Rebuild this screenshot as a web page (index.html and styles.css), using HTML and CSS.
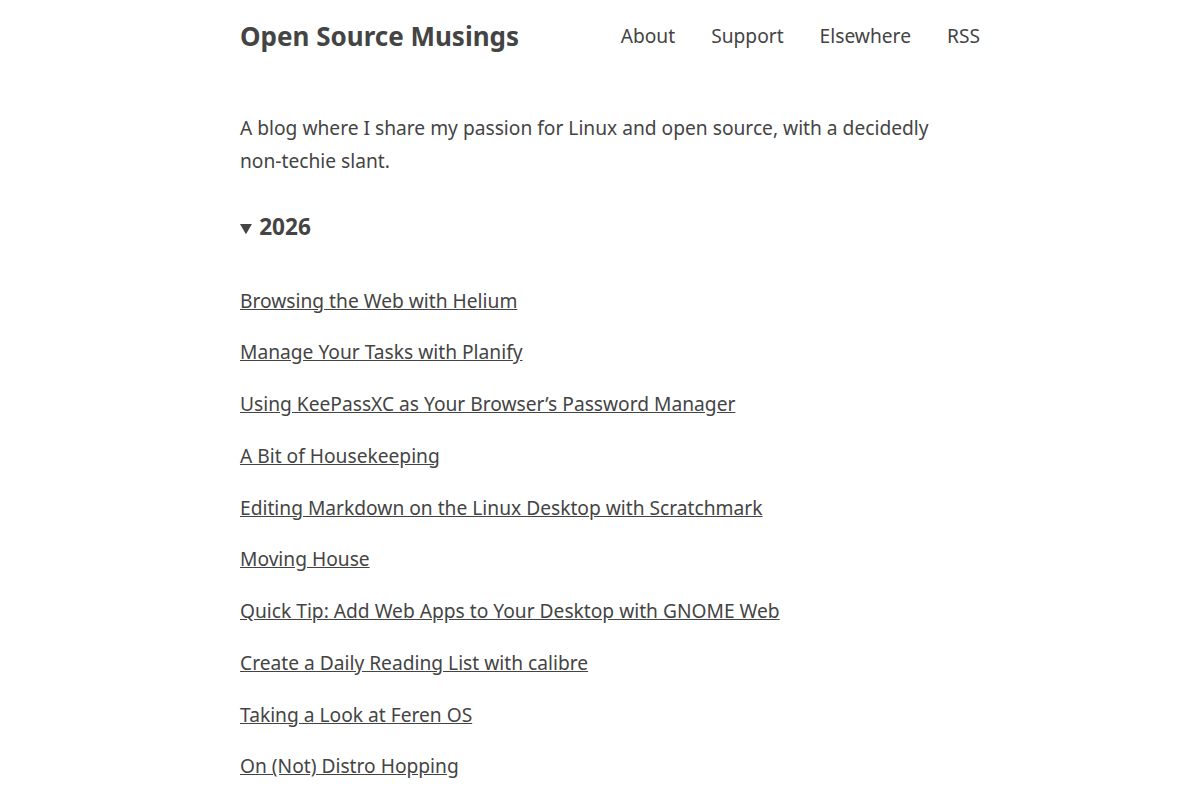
FILE: index.html
```html
<!DOCTYPE html>
<html lang="en">
<head>
    <meta charset="UTF-8">
    <title>Open Source Musings</title>
    <link rel="stylesheet" href="styles.css">
</head>
<body>
<div class="wrapper">
    <header class="site-header">
        <a class="site-title" href="#">Open Source Musings</a>
        <nav class="site-nav">
            <a href="#">About</a>
            <a href="#">Support</a>
            <a href="#">Elsewhere</a>
            <a href="#">RSS</a>
        </nav>
    </header>
    <main class="content">
        <p class="intro">A blog where I share my passion for Linux and open source, with a decidedly non-techie slant.</p>
        <details open>
            <summary>2026</summary>
            <ul class="post-list">
                <li><a href="#">Browsing the Web with Helium</a></li>
                <li><a href="#">Manage Your Tasks with Planify</a></li>
                <li><a href="#">Using KeePassXC as Your Browser’s Password Manager</a></li>
                <li><a href="#">A Bit of Housekeeping</a></li>
                <li><a href="#">Editing Markdown on the Linux Desktop with Scratchmark</a></li>
                <li><a href="#">Moving House</a></li>
                <li><a href="#">Quick Tip: Add Web Apps to Your Desktop with GNOME Web</a></li>
                <li><a href="#">Create a Daily Reading List with calibre</a></li>
                <li><a href="#">Taking a Look at Feren OS</a></li>
                <li><a href="#">On (Not) Distro Hopping</a></li>
            </ul>
        </details>
    </main>
</div>
</body>
</html>
```

FILE: styles.css
```css
body {
    margin: 0;
    background: #fff;
    color: #444;
    font-family: "Noto Sans", "Open Sans", sans-serif;
    font-size: 19.2px;
    line-height: 1.7;
}

a {
    color: #444;
}

.wrapper {
    width: 740px;
    margin-left: 240px;
}

.site-header {
    display: flex;
    justify-content: space-between;
    align-items: center;
    height: 72px;
}

.site-title {
    font-size: 26px;
    font-weight: 700;
    text-decoration: none;
}

.site-nav {
    display: flex;
    gap: 36px;
}

.site-nav a {
    text-decoration: none;
}

.content {
    max-width: 720px;
}

.intro {
    margin: 40px 0 0;
}

details {
    margin-top: 31px;
}

summary {
    font-size: 22.6px;
    font-weight: 700;
    cursor: pointer;
}

summary::marker {
    font-size: 0.8em;
}

.post-list {
    list-style: none;
    padding: 0;
    margin: 38px 0 0;
}

.post-list li {
    margin-bottom: 19.1px;
}
```
